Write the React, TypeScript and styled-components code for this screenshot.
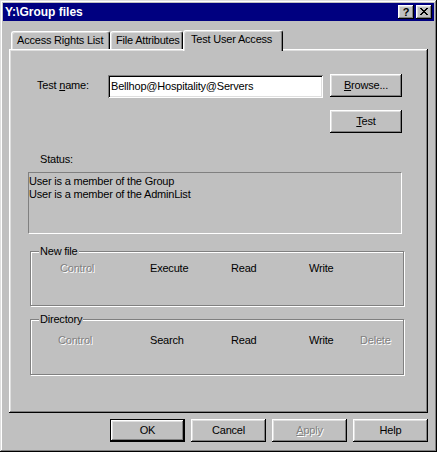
import * as React from 'react';
import styled, { createGlobalStyle } from 'styled-components';

const GlobalStyle = createGlobalStyle`
  html, body {
    margin: 0;
    padding: 0;
    background: #c0c0c0;
  }
  body {
    font-family: "Liberation Sans", Arial, sans-serif;
    font-size: 11px;
    letter-spacing: -0.2px;
    color: #000;
  }
`;

const raised = `
  box-shadow: inset -1px -1px #000, inset 1px 1px #fff, inset -2px -2px #808080, inset 2px 2px #dfdfdf;
`;

const StyledWindow = styled.div`
  width: 437px;
  height: 452px;
  box-sizing: border-box;
  padding: 3px;
  background: #c0c0c0;
  box-shadow: inset -1px -1px #000, inset 1px 1px #dfdfdf, inset -2px -2px #808080, inset 2px 2px #fff;
  display: flex;
  flex-direction: column;
`;

const StyledTitleBar = styled.div`
  height: 18px;
  background: #000080;
  display: flex;
  align-items: center;
  padding: 0 2px;
`;

const StyledTitle = styled.span`
  flex: 1;
  color: #fff;
  font-weight: bold;
  font-size: 12px;
  line-height: 14px;
  letter-spacing: 0;
`;

const StyledCaptionButton = styled.div<{ $gap?: number }>`
  width: 16px;
  height: 14px;
  margin-left: ${(p) => p.$gap || 0}px;
  background: #c0c0c0;
  ${raised}
  display: flex;
  align-items: center;
  justify-content: center;
  font-weight: bold;
  font-size: 11px;
  line-height: 14px;
  box-sizing: border-box;
  padding-bottom: 1px;
`;

const StyledBody = styled.div`
  flex: 1;
  display: flex;
  flex-direction: column;
  padding: 8px 6px 0 6px;
`;

const StyledTabStrip = styled.div`
  height: 20px;
  display: flex;
  align-items: flex-end;
  padding-left: 2px;
`;

const StyledTab = styled.div<{ $active?: boolean; $width: number }>`
  position: relative;
  z-index: ${(p) => (p.$active ? 2 : 0)};
  width: ${(p) => p.$width}px;
  height: ${(p) => (p.$active ? 21 : 18)}px;
  margin-bottom: ${(p) => (p.$active ? -2 : 0)}px;
  padding: ${(p) => (p.$active ? '2px 0 0 7px' : '0 0 0 5px')};
  box-sizing: border-box;
  background: #c0c0c0;
  border-top: 1px solid #fff;
  border-left: 1px solid #fff;
  border-right: 1px solid #000;
  border-radius: 3px 3px 0 0;
  box-shadow: inset -1px 0 #808080, inset 1px 1px #dfdfdf;
  display: flex;
  align-items: ${(p) => (p.$active ? 'flex-start' : 'center')};
  white-space: nowrap;
  line-height: 13px;
`;

const StyledPanel = styled.div`
  position: relative;
  z-index: 1;
  height: 364px;
  box-sizing: border-box;
  background: #c0c0c0;
  ${raised}
  padding: 25px 0 0 19px;
  display: flex;
  flex-direction: column;
`;

const StyledNameGrid = styled.div`
  display: grid;
  grid-template-columns: 71px 222px 72px;
  grid-template-rows: 23px 23px;
  row-gap: 13px;
  margin-left: 9px;
  align-items: center;
`;

const StyledLabel = styled.label<{ $indent?: number }>`
  line-height: 13px;
  margin-left: ${(p) => p.$indent || 0}px;
`;

const StyledInput = styled.div`
  width: 215px;
  height: 23px;
  box-sizing: border-box;
  background: #fff;
  box-shadow: inset 1px 1px #808080, inset -1px -1px #fff, inset 2px 2px #000, inset -2px -2px #dfdfdf;
  padding: 0 3px;
  display: flex;
  align-items: center;
  margin-top: 1px;
  white-space: nowrap;
`;

const StyledButton = styled.div<{ $width?: number; $default?: boolean; $column?: number }>`
  width: ${(p) => p.$width || 72}px;
  height: 23px;
  box-sizing: border-box;
  background: #c0c0c0;
  ${raised}
  border: ${(p) => (p.$default ? '1px solid #000' : 'none')};
  display: flex;
  align-items: center;
  justify-content: center;
  line-height: 13px;
  grid-column: ${(p) => p.$column || 'auto'};
`;

const StyledDisabled = styled.span`
  color: #808080;
  text-shadow: 1px 1px #fff;
`;

const StyledStatusBox = styled.div`
  width: 374px;
  height: 62px;
  box-sizing: border-box;
  margin-top: 6px;
  border-top: 1px solid #808080;
  border-left: 1px solid #808080;
  border-right: 1px solid #fff;
  border-bottom: 1px solid #fff;
  padding: 2px 0 0 0;
  line-height: 13px;
`;

const StyledGroupBox = styled.div<{ $top: number; $height: number; $pad: number }>`
  position: relative;
  width: 374px;
  height: ${(p) => p.$height}px;
  box-sizing: border-box;
  margin: ${(p) => p.$top}px 0 0 2px;
  border: 1px solid #808080;
  box-shadow: inset 1px 1px #fff, 1px 1px #fff;
  padding-top: ${(p) => p.$pad}px;
`;

const StyledLegend = styled.span`
  position: absolute;
  top: -7px;
  left: 8px;
  padding: 0 1px 0 1px;
  background: #c0c0c0;
  line-height: 13px;
`;

const StyledRightsRow = styled.div<{ $indent: number; $first: number }>`
  display: grid;
  grid-template-columns: ${(p) => p.$first}px 81px 78px 51px auto;
  padding-left: ${(p) => p.$indent}px;
  line-height: 13px;
`;

const StyledButtonRow = styled.div`
  display: flex;
  justify-content: flex-end;
  gap: 6px;
  margin-top: 6px;
`;

const Accel = ({ text, at }: { text: string; at: number }) => (
  <>
    {text.slice(0, at)}
    <u>{text[at]}</u>
    {text.slice(at + 1)}
  </>
);

function Rights({ items }: { items: { name: string; enabled: boolean }[] }) {
  return (
    <>
      {items.map((it) =>
        it.enabled ? <span key={it.name}>{it.name}</span> : <StyledDisabled key={it.name}>{it.name}</StyledDisabled>
      )}
    </>
  );
}

export default function App() {
  const [name] = React.useState('Bellhop@Hospitality@Servers');

  return (
    <>
      <GlobalStyle />
      <StyledWindow>
        <StyledTitleBar>
          <StyledTitle>Y:\Group files</StyledTitle>
          <StyledCaptionButton>?</StyledCaptionButton>
          <StyledCaptionButton $gap={2}>
            <svg width="8" height="7" viewBox="0 0 8 7" shapeRendering="crispEdges">
              <path d="M0 0h2v1h-2zM6 0h2v1h-2zM1 1h2v1h-2zM5 1h2v1h-2zM2 2h4v1h-4zM3 3h2v1h-2zM2 4h4v1h-4zM1 5h2v1h-2zM5 5h2v1h-2zM0 6h2v1h-2zM6 6h2v1h-2z" fill="#000" />
            </svg>
          </StyledCaptionButton>
        </StyledTitleBar>

        <StyledBody>
          <StyledTabStrip>
            <StyledTab $width={99}>Access Rights List</StyledTab>
            <StyledTab $width={73}>File Attributes</StyledTab>
            <StyledTab $width={100} $active>
              Test User Access
            </StyledTab>
          </StyledTabStrip>

          <StyledPanel>
            <StyledNameGrid>
              <StyledLabel>
                <Accel text="Test name:" at={5} />
              </StyledLabel>
              <StyledInput>{name}</StyledInput>
              <StyledButton>
                <span>
                  <Accel text="Browse..." at={0} />
                </span>
              </StyledButton>
              <StyledButton $column={3}>
                <span>
                  <Accel text="Test" at={0} />
                </span>
              </StyledButton>
            </StyledNameGrid>

            <StyledLabel $indent={12} style={{ marginTop: 20 }}>
              Status:
            </StyledLabel>
            <StyledStatusBox>
              User is a member of the Group
              <br />
              User is a member of the AdminList
            </StyledStatusBox>

            <StyledGroupBox $top={17} $height={55} $pad={10}>
              <StyledLegend>New file</StyledLegend>
              <StyledRightsRow $indent={29} $first={90}>
                <Rights
                  items={[
                    { name: 'Control', enabled: false },
                    { name: 'Execute', enabled: true },
                    { name: 'Read', enabled: true },
                    { name: 'Write', enabled: true },
                  ]}
                />
              </StyledRightsRow>
            </StyledGroupBox>

            <StyledGroupBox $top={13} $height={56} $pad={14}>
              <StyledLegend>Directory</StyledLegend>
              <StyledRightsRow $indent={27} $first={92}>
                <Rights
                  items={[
                    { name: 'Control', enabled: false },
                    { name: 'Search', enabled: true },
                    { name: 'Read', enabled: true },
                    { name: 'Write', enabled: true },
                    { name: 'Delete', enabled: false },
                  ]}
                />
              </StyledRightsRow>
            </StyledGroupBox>
          </StyledPanel>

          <StyledButtonRow>
            <StyledButton $width={75} $default>
              OK
            </StyledButton>
            <StyledButton $width={75}>Cancel</StyledButton>
            <StyledButton $width={75}>
              <StyledDisabled>
                <Accel text="Apply" at={0} />
              </StyledDisabled>
            </StyledButton>
            <StyledButton $width={75}>Help</StyledButton>
          </StyledButtonRow>
        </StyledBody>
      </StyledWindow>
    </>
  );
}
